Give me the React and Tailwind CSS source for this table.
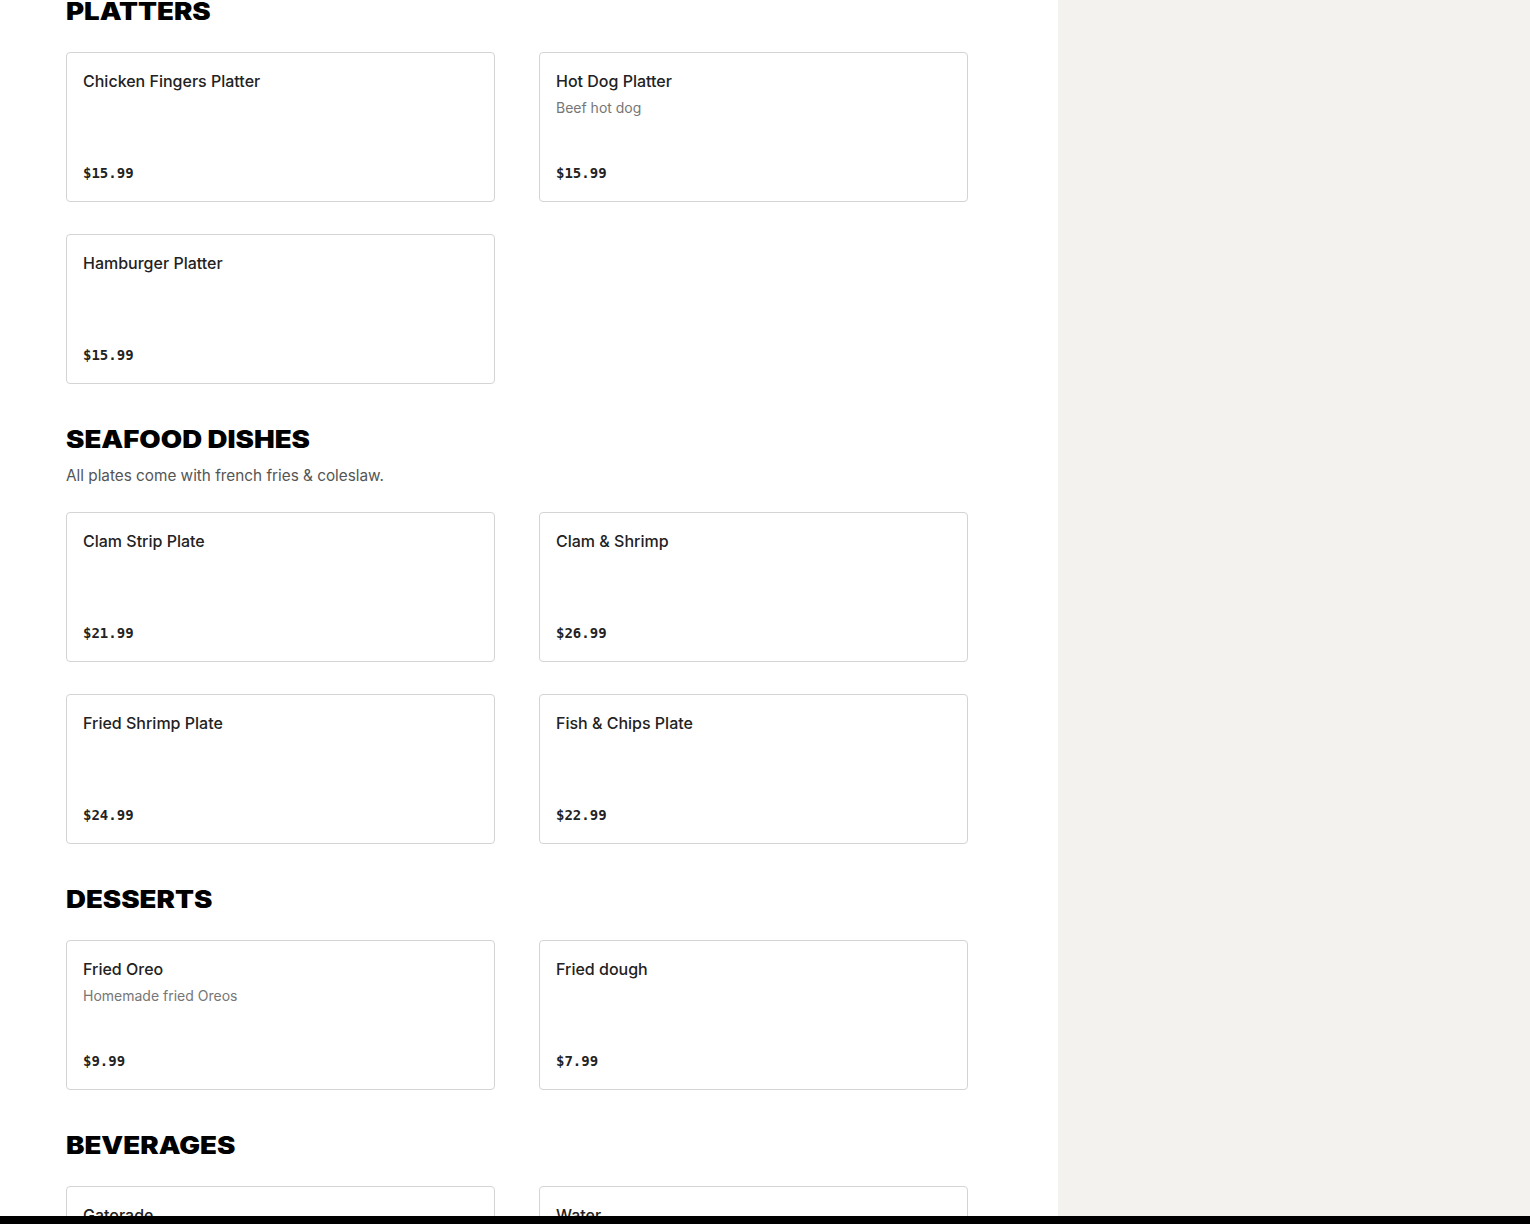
import React from 'react';

const sections = [
  {
    title: 'PLATTERS',
    items: [
      { name: 'Chicken Fingers Platter', price: '$15.99' },
      { name: 'Hot Dog Platter', desc: 'Beef hot dog', price: '$15.99' },
      { name: 'Hamburger Platter', price: '$15.99' },
    ],
  },
  {
    title: 'SEAFOOD DISHES',
    note: 'All plates come with french fries & coleslaw.',
    items: [
      { name: 'Clam Strip Plate', price: '$21.99' },
      { name: 'Clam & Shrimp', price: '$26.99' },
      { name: 'Fried Shrimp Plate', price: '$24.99' },
      { name: 'Fish & Chips Plate', price: '$22.99' },
    ],
  },
  {
    title: 'DESSERTS',
    items: [
      { name: 'Fried Oreo', desc: 'Homemade fried Oreos', price: '$9.99' },
      { name: 'Fried dough', price: '$7.99' },
    ],
  },
  {
    title: 'BEVERAGES',
    items: [
      { name: 'Gatorade', price: '$2.99' },
      { name: 'Water', price: '$1.99' },
    ],
  },
];

function ItemCard({ item }) {
  return (
    <div className="h-[150px] border border-[#d4d4d4] rounded-[4px] bg-white px-4 pt-4 pb-4 flex flex-col justify-between">
      <div>
        <div className="text-[16px] leading-6 font-medium text-[#222]">{item.name}</div>
        {item.desc && <div className="text-[14px] leading-5 mt-[5px] text-[#767676]">{item.desc}</div>}
      </div>
      <div className="font-['DejaVu_Sans_Mono',monospace] text-[14px] leading-6 font-bold text-[#222]">{item.price}</div>
    </div>
  );
}

export default function App() {
  return (
    <div className="flex min-h-screen font-['Inter',sans-serif] bg-white">
      <div className="w-[1058px] shrink-0 pl-[66px] pr-[90px] -mt-1">
        {sections.map((s) => (
          <section key={s.title} className="mb-10">
            <h2 className="h-8 text-[24px] leading-8 font-black text-black">
              <span className="inline-block origin-left scale-x-[1.15]">{s.title}</span>
            </h2>
            {s.note && <p className="mt-2 text-[15.3px] leading-6 text-[#555]">{s.note}</p>}
            <div className="mt-6 grid grid-cols-2 gap-x-11 gap-y-8">
              {s.items.map((item) => (
                <ItemCard key={item.name} item={item} />
              ))}
            </div>
          </section>
        ))}
      </div>
      <div className="flex-1 bg-[#f3f2ef]" />
      <div className="fixed bottom-0 left-0 right-0 h-2 bg-black" />
    </div>
  );
}
